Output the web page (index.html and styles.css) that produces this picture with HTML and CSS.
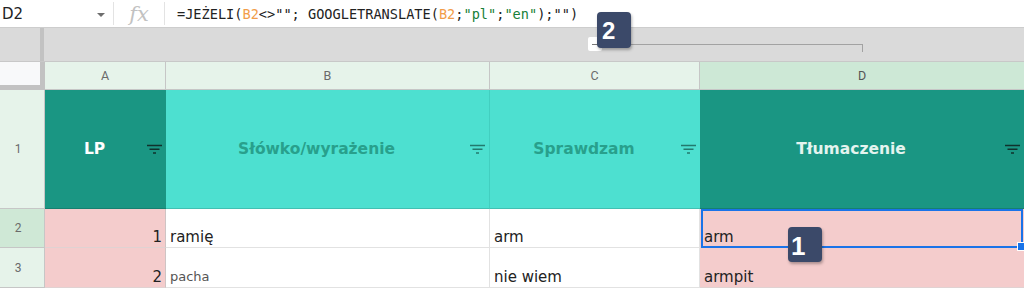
FILE: index.html
```html
<!DOCTYPE html>
<html lang="pl">
<head>
<meta charset="utf-8">
<title>Arkusz</title>
<link rel="stylesheet" href="styles.css">
</head>
<body>
<div class="app">
  <div class="formula-bar">
    <div class="name-box"><span class="name">D2</span><span class="caret"></span></div>
    <div class="sep"></div>
    <div class="fx">fx</div>
    <div class="sep"></div>
    <div class="formula">=JEŻELI(<span class="ref">B2</span>&lt;&gt;""; GOOGLETRANSLATE(<span class="ref">B2</span>;<span class="str">"pl"</span>;<span class="str">"en"</span>);"")</div>
  </div>
  <div class="group-band">
    <div class="band-corner"></div>
    <div class="band-divider"></div>
    <div class="band-main">
      <div class="group-toggle"></div>
      <div class="group-line"></div>
    </div>
  </div>
  <div class="sheet">
    <div class="corner"></div>
    <div class="col-head">A</div>
    <div class="col-head">B</div>
    <div class="col-head">C</div>
    <div class="col-head sel last">D</div>

    <div class="row-head">1</div>
    <div class="hcell teal"><span class="label">LP</span><svg viewBox="0 0 15 12"><path d="M0 2.5H15M2.5 6.25H12.5M6 10H9"/></svg></div>
    <div class="hcell turq bordered"><span class="label">Słówko/wyrażenie</span><svg viewBox="0 0 15 12"><path d="M0 2.5H15M2.5 6.25H12.5M6 10H9"/></svg></div>
    <div class="hcell turq"><span class="label">Sprawdzam</span><svg viewBox="0 0 15 12"><path d="M0 2.5H15M2.5 6.25H12.5M6 10H9"/></svg></div>
    <div class="hcell teal light"><span class="label">Tłumaczenie</span><svg viewBox="0 0 15 12"><path d="M0 2.5H15M2.5 6.25H12.5M6 10H9"/></svg></div>

    <div class="row-head sel">2</div>
    <div class="cell pink num">1</div>
    <div class="cell">ramię</div>
    <div class="cell">arm</div>
    <div class="cell pink selected last">arm</div>

    <div class="row-head">3</div>
    <div class="cell pink num">2</div>
    <div class="cell small">pacha</div>
    <div class="cell">nie wiem</div>
    <div class="cell pink last">armpit</div>
  </div>
  <div class="badge badge-2">2</div>
  <div class="badge badge-1">1</div>
</div>
</body>
</html>
```
FILE: styles.css
```css
* { box-sizing: border-box; }
html, body { margin: 0; padding: 0; }
body {
  width: 1024px;
  height: 289px;
  overflow: hidden;
  background: #fff;
  font-family: "DejaVu Sans", sans-serif;
}
.app {
  position: relative;
  width: 1024px;
  height: 289px;
  overflow: hidden;
}

/* formula bar */
.formula-bar {
  display: flex;
  align-items: center;
  height: 28px;
  border-bottom: 1px solid #cdcdcd;
}
.name-box {
  display: flex;
  align-items: center;
  justify-content: space-between;
  width: 113px;
  height: 100%;
  padding: 0 8px 0 2px;
  font-size: 15px;
  color: #222;
}
.caret {
  width: 0;
  height: 0;
  margin-top: 2px;
  border-left: 4px solid transparent;
  border-right: 4px solid transparent;
  border-top: 4px solid #6e6e6e;
}
.sep {
  width: 1px;
  height: 23px;
  background: #e3e3e3;
}
.fx {
  width: 50px;
  text-align: center;
  font-family: "DejaVu Serif", serif;
  font-style: italic;
  font-size: 21px;
  line-height: 24px;
  color: #c2c2c2;
}
.formula {
  margin-left: 12px;
  font-family: "DejaVu Sans Mono", monospace;
  font-size: 13.6px;
  color: #222;
  white-space: pre;
}
.ref { color: #f29d4a; }
.str { color: #188038; }

/* group band */
.group-band {
  display: flex;
  height: 34px;
  background: #dadada;
  border-bottom: 1px solid #c8c8c8;
}
.band-corner { width: 40px; }
.band-divider { width: 4px; background: #c2c2c2; }
.band-main {
  flex: 1;
  display: flex;
  align-items: flex-start;
  padding-left: 544px;
}
.group-toggle {
  margin-top: 9px;
  width: 14px;
  height: 14px;
  background: #fff;
  border-radius: 2px;
  display: flex;
  align-items: center;
  justify-content: center;
}
.group-toggle::before {
  content: "";
  width: 6px;
  height: 1px;
  background: #777;
}
.group-line {
  margin-top: 16px;
  width: 261px;
  height: 8px;
  border-top: 1px solid #a2a2a2;
  border-right: 1.5px solid #a2a2a2;
}

/* sheet grid */
.sheet {
  display: grid;
  grid-template-columns: 45px 121px 324px 210px 324px;
  grid-template-rows: 28px 119px 39px 40px;
}
.corner {
  background: #f8f9fa;
  border-right: 5px solid #c2c2c2;
  border-bottom: 5px solid #c2c2c2;
}
.col-head {
  display: flex;
  align-items: center;
  justify-content: center;
  background: #e6f3ea;
  border-right: 1px solid #c6c6c6;
  border-bottom: 1px solid #c6c6c6;
  font-family: Roboto, "DejaVu Sans", sans-serif;
  font-size: 12.5px;
  color: #6a6a6a;
}
.col-head.sel { background: #cde8d6; color: #555; }
.col-head.last { border-right: none; }
.row-head {
  display: flex;
  align-items: center;
  justify-content: center;
  padding-right: 8px;
  background: #e6f3ea;
  border-right: 1px solid #c6c6c6;
  border-bottom: 1px solid #c6c6c6;
  font-family: Roboto, "DejaVu Sans", sans-serif;
  font-size: 12px;
  color: #6a6a6a;
}
.row-head.sel { background: #cfe8d6; }

.hcell {
  display: flex;
  align-items: center;
  border-bottom: 1px solid rgba(0, 0, 0, 0.14);
  font-weight: bold;
  font-size: 15.5px;
}
.hcell .label {
  flex: 1;
  text-align: center;
}
.hcell svg {
  flex: none;
  width: 15px;
  height: 12px;
  margin: 0 4px 0 3px;
  fill: none;
  stroke-width: 1.5;
}
.teal { background: #1a9683; color: #fff; }
.teal svg { stroke: #10322c; }
.teal.light { color: #e4f4ef; }
.turq { background: #4de0d0; color: #28a08c; }
.turq svg { stroke: #237a6e; }
.turq.bordered { border-right: 1px solid #42cfc0; }

.cell {
  display: flex;
  align-items: flex-end;
  padding: 0 4px 1px 4px;
  border-right: 1px solid #e2e2e2;
  border-bottom: 1px solid #e2e2e2;
  font-size: 15px;
  line-height: 18px;
  color: #222;
}
.cell.last { border-right: none; }
.pink {
  background: #f4cccc;
  border-bottom-color: #e0d2d2;
}
.num {
  justify-content: flex-end;
  padding-right: 3px;
  border-right-color: #cfc4c4;
}
.small {
  font-size: 13px;
  line-height: 16px;
  color: #555;
  padding-bottom: 2px;
}
.selected { position: relative; }
.selected::after {
  content: "";
  position: absolute;
  top: 0;
  left: 1px;
  right: 1px;
  bottom: -1px;
  border: 2px solid #1a73e8;
}
.selected::before {
  content: "";
  position: absolute;
  right: -2px;
  bottom: -4px;
  width: 7px;
  height: 7px;
  background: #1a73e8;
  border: 1px solid #fff;
  z-index: 1;
}

/* annotation badges */
.badge {
  position: absolute;
  background: #3b4969;
  border-radius: 4px;
  box-shadow: 1px 2px 3px rgba(0, 0, 0, 0.3);
  color: #fff;
  font-family: "Liberation Sans", Arial, sans-serif;
  font-weight: bold;
  z-index: 2;
}
.badge-2 {
  left: 597px;
  top: 12px;
  width: 34px;
  height: 36px;
  padding: 2px 0 0 5px;
  font-size: 24px;
  line-height: 34px;
}
.badge-1 {
  left: 788px;
  top: 227px;
  width: 34px;
  height: 35px;
  padding: 3px 0 0 3px;
  font-size: 26px;
  line-height: 32px;
}
```
